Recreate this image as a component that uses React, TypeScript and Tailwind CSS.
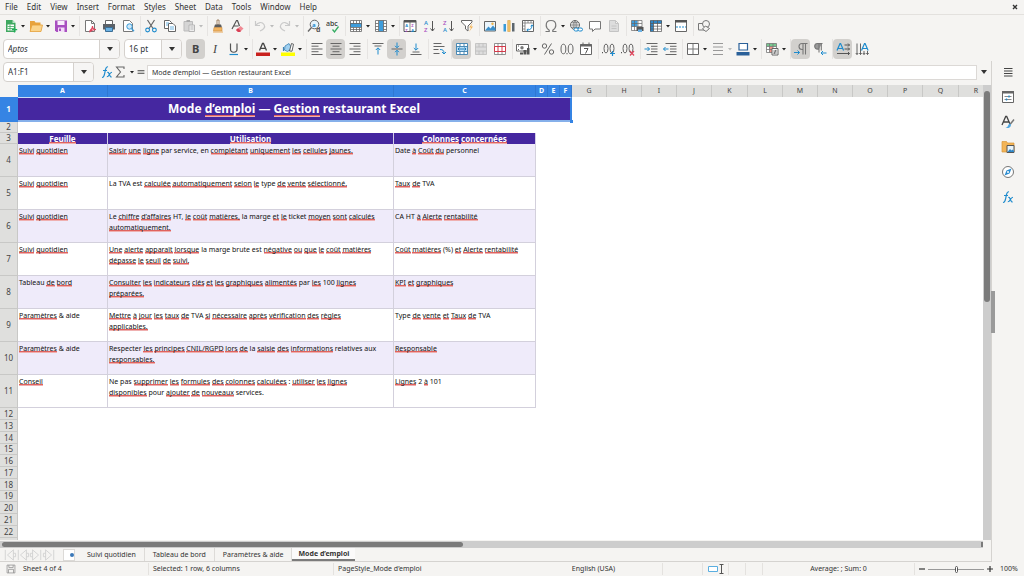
import { useState } from "react";
import type { ReactNode } from "react";
import clsx from "clsx";

const DARK = "#555";
const BLUE = "#1e8bcd";

const MENUS = ["File", "Edit", "View", "Insert", "Format", "Styles", "Sheet", "Data", "Tools", "Window", "Help"];

const page = <path d="M2.5 1.5h6l3 3v8h-9z" fill="#fff" stroke="#777" />;

const ICONS: Record<string, ReactNode> = {
  new: (
    <>
      <path d="M2 1h6.500l3 3v9H2z" fill="#3fa860" />
      <path d="M8.500 1v3h3z" fill="#b5e3c3" />
      <path d="M3.500 5.500h6.500v6H3.500z" fill="#fff" />
      <path d="M3.500 7.500h6.500M3.500 9.500h6.500M6 5.500v6" stroke="#3fa860" strokeWidth="0.8" />
      <path d="M10.500 8v5.500M7.800 10.700h5.400" stroke="#1fae57" strokeWidth="1.300" />
    </>
  ),
  open: (
    <>
      <path d="M1 2h4.500l1 1.500h5V12H1z" fill="#e8a33d" />
      <path d="M1 12.500 3 6h10.500L12 12.500z" fill="#fbd48b" stroke="#e59f38" strokeWidth="0.8" />
    </>
  ),
  save: (
    <>
      <path d="M1 1.500h12v11.500H2.500L1 11.500z" fill="#a84fc0" />
      <path d="M3.500 2h7v4h-7z" fill="#f8eefb" />
      <path d="M4 8.500h6.500V13H4z" fill="#f3ddf8" />
      <path d="M5 9.500h2V12H5z" fill="#a84fc0" />
    </>
  ),
  pdf: (
    <>
      {page}
      <path d="M8.500 1.500v3h3" fill="none" stroke="#777" />
      <path d="M7 11.500c2-1 2.500-3 2.500-4.500 0 2 1.500 3.500 3.500 3.500-2 0-4 .3-6 2z" fill="none" stroke="#e0445c" strokeWidth="1.100" />
    </>
  ),
  print: (
    <>
      <path d="M3.500 1.500h7v4h-7z" fill="#fff" stroke="#666" />
      <path d="M1 5h12v5.500H1z" fill="#5a6066" />
      <path d="M3.500 8.500h7v4h-7z" fill="#6cb2e4" stroke="#3c6f96" />
    </>
  ),
  preview: (
    <>
      {page}
      <circle cx="8.500" cy="7.500" r="2.700" fill="#cfe9fa" stroke="#3a9bd8" />
      <path d="m10.500 9.500 2.500 2.800" stroke="#3a9bd8" strokeWidth="1.300" />
    </>
  ),
  cut: (
    <>
      <path d="M3.500 1 9 9.500M10.500 1 5 9.500" stroke="#666" strokeWidth="1.200" />
      <circle cx="3.600" cy="11" r="1.900" fill="none" stroke={BLUE} strokeWidth="1.100" />
      <circle cx="10.400" cy="11" r="1.900" fill="none" stroke={BLUE} strokeWidth="1.100" />
    </>
  ),
  copy: (
    <>
      <path d="M1.500 1.500h5l2 2v6h-7z" fill="#fff" stroke="#666" />
      <path d="M5.500 4.500h4.500l2.500 2.500v5.500h-7z" fill="#fff" stroke="#666" />
      <path d="M3 4h3M3 6h2M7 8h4M7 10h4" stroke="#5aa9dc" strokeWidth="0.9" />
    </>
  ),
  paste: (
    <>
      <path d="M2 2.500h8.500V12H2z" fill="#d5d5d5" stroke="#bbb" />
      <path d="M4.500 1h3.500v2H4.500z" fill="#aaa" />
      <path d="M7 6h5.500v6.500H7z" fill="#eee" stroke="#b5b5b5" />
      <path d="M8.500 8h3M8.500 10h3" stroke="#bbb" />
    </>
  ),
  brush: (
    <>
      <path d="M6 1h2v5H6z" fill="#fff" stroke="#8a6844" strokeWidth="0.8" />
      <path d="M4 5.500h6l1 3H3z" fill="#5d5d5d" />
      <path d="M3 8.500h8V12H2.500z" fill="#f3b562" stroke="#c98a3c" strokeWidth="0.6" />
      <path d="M2 13h10" stroke="#e8a858" />
    </>
  ),
  clear: (
    <>
      <path d="M2 10 6.500 1.500h1L9.500 7M3.700 7h4.800" fill="none" stroke={DARK} strokeWidth="1.200" />
      <path d="m6 11 4.500-4 3 2.500L10 13H8z" fill="#f08a94" />
      <path d="m6 11 2-1.800 3 2.800-1 1H8z" fill="#d94156" />
    </>
  ),
  undo: <path d="M2.500 2v4.500H7M2.800 6.300C5 3 9 2.500 11 5.500S10 10.500 7 12" fill="none" stroke="#c9c9c9" strokeWidth="1.200" />,
  redo: <path d="M11.500 2v4.500H7M11.200 6.300C9 3 5 2.500 3 5.500S4 10.500 7 12" fill="none" stroke="#c9c9c9" strokeWidth="1.200" />,
  find: (
    <>
      <circle cx="7.500" cy="5.500" r="4.300" fill="#e6f4fc" stroke="#666" />
      <path d="M4.500 8.500 1 12.500" stroke="#666" strokeWidth="1.400" />
      <text x="5" y="7.500" fontSize="6" fontWeight="700" fill={BLUE}>a</text>
      <text x="9" y="13" fontSize="7" fontWeight="700" fill={DARK}>d</text>
    </>
  ),
  spell: (
    <>
      <text x="0" y="7" fontSize="7" fontWeight="500" fill="#333">abc</text>
      <path d="m6.500 10.500 2 2.500L12.500 7.500" fill="none" stroke="#35ad63" strokeWidth="1.300" />
    </>
  ),
  row: (
    <>
      <path d="M1 1.500h12v11H1z" fill="#fff" />
      <path d="M1 4h12v4H1z" fill="#3f9ddb" />
      <path d="M1.500 1.500h11v11h-11zM1.500 4.500h11M1.500 8.500h11M1.500 10.500h11M4.500 1.500v3M7.500 1.500v3M10.500 1.500v3M4.500 8.500v4M7.500 8.500v4M10.500 8.500v4" fill="none" stroke="#666" strokeWidth="0.8" />
    </>
  ),
  column: (
    <>
      <path d="M1 1.500h12v11H1z" fill="#fff" />
      <path d="M5 1.500h4.500v11H5z" fill="#3f9ddb" />
      <path d="M1.500 1.500h11v11h-11zM4.500 1.500v11M9.500 1.500v11M1.500 4.500h3M1.500 7.500h3M1.500 10.500h3M9.500 4.500h3M9.500 7.500h3M9.500 10.500h3" fill="none" stroke="#666" strokeWidth="0.8" />
    </>
  ),
  sort: (
    <>
      <path d="M1 1.500h12v11H1z" fill="#fff" stroke={DARK} />
      <path d="M1 1h12v2.500H1z" fill="#555" />
      <path d="M7 3v10" stroke={DARK} strokeWidth="0.7" />
      <text x="2.300" y="7.500" fontSize="4" fontWeight="700" fill={BLUE}>A</text>
      <text x="2.300" y="12.500" fontSize="4" fontWeight="700" fill="#a84fc0">Z</text>
      <text x="8.300" y="7.500" fontSize="4" fontWeight="700" fill="#a84fc0">Z</text>
      <text x="8.300" y="12.500" fontSize="4" fontWeight="700" fill={BLUE}>A</text>
    </>
  ),
  ascending: (
    <>
      <text x="2" y="5.500" fontSize="6" fontWeight="500" fill={BLUE}>A</text>
      <text x="2" y="13" fontSize="6" fontWeight="500" fill="#a84fc0">Z</text>
      <path d="M10.500 2v10M8.500 9.500l2 2.500 2-2.500" fill="none" stroke={DARK} />
    </>
  ),
  descending: (
    <>
      <text x="2" y="5.500" fontSize="6" fontWeight="500" fill="#a84fc0">Z</text>
      <text x="2" y="13" fontSize="6" fontWeight="500" fill={BLUE}>A</text>
      <path d="M10.500 2v10M8.500 9.500l2 2.500 2-2.500" fill="none" stroke={DARK} />
    </>
  ),
  filter: (
    <>
      <path d="M1.500 1.500h10.500v1.500L8 7v5l-2.500-2V7l-4-4z" fill="#fff" stroke="#666" />
      <path d="m12.500 4-3.300 4.500h2L9 13l4-5.500h-2z" fill="#f5b04c" />
    </>
  ),
  image: (
    <>
      <path d="M1.500 2.500h11v9.500h-11z" fill="#eaf5fc" stroke="#666" />
      <path d="m2 11.500 3.500-4 2 2 2.500-3 2.500 3v2z" fill="#3a8fcb" />
      <circle cx="9.500" cy="4.800" r="1.200" fill="#f2b349" />
    </>
  ),
  chart: (
    <>
      <path d="M1.500 5h2.500v7.500H1.500z" fill="#3a9bd8" />
      <path d="M5.700 1.500h2.500v11H5.700z" fill="#f2c46d" stroke="#d79a36" strokeWidth="0.5" />
      <path d="M10 4h2.500v8.500H10z" fill="#5c666e" />
    </>
  ),
  pivot: (
    <>
      <path d="M1.500 1.500h11v11h-11z" fill="#fff" stroke="#666" />
      <path d="M1.500 4h11M4 1.500v11M7 1.500v2.500M10 1.500v2.500M1.500 7h2.500M1.500 10h2.500" stroke="#777" strokeWidth="0.8" />
      <path d="M6 11c3.500 0 5-1.500 5-5M9.700 7.300 11 5.800l1.300 1.500M7.300 9.600 5.800 11l1.500 1.300" fill="none" stroke={BLUE} />
    </>
  ),
  omega: <path d="M1.500 12.500h3.700v-1.300C3.200 10 2.200 8.300 2.200 6.300 2.200 3.300 4.300 1.500 7 1.500s4.800 1.800 4.800 4.800c0 2-1 3.700-3 4.900v1.300h3.700" fill="none" stroke="#777" strokeWidth="1.200" />,
  link: (
    <>
      <circle cx="6" cy="6" r="4.500" fill="#fff" stroke="#666" />
      <path d="M1.500 6h9M6 1.500v9M6 1.500c-2.500 2.500-2.500 6.500 0 9M6 1.500c2.500 2.500 2.500 6.500 0 9M2.300 3.700h7.400M2.300 8.300h7.400" fill="none" stroke="#666" strokeWidth="0.7" />
      <rect x="5" y="9" width="4.500" height="3" rx="1.500" fill="#fff" stroke={BLUE} />
      <rect x="9" y="9" width="4.500" height="3" rx="1.500" fill="#fff" stroke={BLUE} />
    </>
  ),
  comment: <path d="M1.500 2.500h11v7.500H7l-2.500 2.500V10h-3z" fill="#fff" stroke="#777" />,
  header: <path d="M2.500 1.500h6l3 3v8h-9zM8.500 1.500v3h3M4.500 7h5M4.500 9.500h5" fill="#ddd" stroke="#c4c4c4" />,
  printArea: (
    <>
      <path d="M1 1.500h11v10H1z" fill="#fff" />
      <path d="M1.500 1.500h6v6h-6z" fill="#3f9ddb" />
      <path d="M1.500 1.500h10.500v10H1.500zM1.500 4.500H12M1.500 7.500H12M4.500 1.500v10M8 1.500v10" fill="none" stroke="#666" strokeWidth="0.7" />
      <path d="M6.500 8h7v4h-7z" fill="#555" />
      <path d="M8 10.500h4v2.500H8z" fill="#6cb2e4" />
    </>
  ),
  freeze: (
    <>
      <path d="M3.500 3.500h9v9h-9z" fill="#fff" />
      <path d="M1 1.500h12v3H4.500v8H1z" fill="#2f86c6" />
      <path d="M1.500 1.500h11v11h-11zM1.500 4.500h11M1.500 7.200h11M1.500 10h11M4.500 1.500v11M8.500 1.500v11" fill="none" stroke="#555" strokeWidth="0.7" />
    </>
  ),
  split: (
    <>
      <path d="M1.500 1.500h11v11h-11z" fill="#fff" stroke="#666" />
      <path d="M1 1h12v2.500H1z" fill="#555" />
      <path d="M2 8h10" stroke={BLUE} strokeDasharray="2 1" />
    </>
  ),
  shapes: (
    <>
      <path d="M1.500 4.500h6.500V11H1.500z" fill="none" stroke="#777" />
      <circle cx="9" cy="5" r="3.500" fill="#f5f4f2" stroke="#777" />
      <path d="m8.500 7 4 2.500-3.500 3-3.500-2.500z" fill="#f5f4f2" stroke="#777" />
    </>
  ),
  bold: <text x="3" y="11" fontSize="11" fontWeight="700" fill="#444">B</text>,
  italic: <text x="5" y="11" fontSize="12" fontStyle="italic" fontFamily="Liberation Serif, serif" fill="#444">I</text>,
  underline: (
    <>
      <path d="M3.500 1.500v5.500c0 4.300 6.500 4.300 6.500 0V1.500" fill="none" stroke="#555" strokeWidth="1.200" />
      <path d="M2.500 12.500h8.500" stroke={BLUE} strokeWidth="1.200" />
    </>
  ),
  fontColor: (
    <>
      <path d="M3.500 8.500 6.500 1.500h1l3 7M4.700 6.300h4.600" fill="none" stroke="#444" strokeWidth="1.300" />
      <path d="M0 10.500h14V14H0z" fill="#c9211e" />
    </>
  ),
  highlight: (
    <>
      <path d="m4 4 4-2.500 3 5-4.500 3-3-1.500z" fill="#9fd0f0" stroke="#3c82b4" strokeWidth="0.8" />
      <path d="m8.500 9 2-7.500 2 .7-1.500 7z" fill="#fff" stroke="#555" strokeWidth="0.9" />
      <path d="M2.500 5v4" stroke="#3c82b4" strokeWidth="1.200" />
      <path d="M0 10.500h14V14H0z" fill="#ffff00" />
    </>
  ),
  left: <path d="M1.500 1.500h11M1.500 4.200h7M1.500 7h11M1.500 9.700h7M1.500 12.500h11" stroke="#666" />,
  center: <path d="M1.500 1.500h11M3.500 4.200h7M1.500 7h11M3.500 9.700h7M1.500 12.500h11" stroke="#666" />,
  right: <path d="M1.500 1.500h11M5.500 4.200h7M1.500 7h11M5.500 9.700h7M1.500 12.500h11" stroke="#666" />,
  top: (
    <>
      <path d="M1.500 1.500h11M3.500 4h7" stroke="#666" />
      <path d="M7 12.500V6M4.800 8 7 5.800 9.200 8" fill="none" stroke={BLUE} />
    </>
  ),
  middle: (
    <>
      <path d="M1.500 7h11" stroke="#666" />
      <path d="M7 .5v5M5 3.800l2 2 2-2M7 13.500v-5M5 10.200l2-2 2 2" fill="none" stroke={BLUE} />
    </>
  ),
  bottom: (
    <>
      <path d="M1.500 12.500h11M3.500 10h7" stroke="#666" />
      <path d="M7 1.500V8M4.800 6 7 8.200 9.200 6" fill="none" stroke={BLUE} />
    </>
  ),
  wrap: (
    <>
      <path d="M1.500 1.500h8M1.500 4.500h11M1.500 7.500h5M1.500 11.500h6" stroke="#666" />
      <path d="M8 7.500c3 0 4 1 4 4M10 10l2 2 2-2" fill="none" stroke={BLUE} />
    </>
  ),
  merge: (
    <>
      <path d="M1.500 1.500h11v11h-11z" fill="#fff" />
      <path d="M1.500 4.500h11v5h-11z" fill="#b8def5" />
      <path d="M1.500 1.500h11v11h-11zM1.500 4.500h11M1.500 9.500h11M5 1.500v3M9 1.500v3M5 9.500v3M9 9.500v3" fill="none" stroke="#3b7fae" strokeWidth="0.9" />
      <path d="M3 7h8M4.500 5.500 3 7l1.500 1.500M9.500 5.500 11 7 9.500 8.500" fill="none" stroke="#1674b5" strokeWidth="0.9" />
    </>
  ),
  mergeCells: (
    <>
      <path d="M1.500 1.500h11v11h-11z" fill="#ddd" />
      <path d="M1.500 1.500h11v11h-11zM1.500 5h11M1.500 9h11M5 1.500v3.500M9 1.500v3.500M5 9v3.500M9 9v3.500" fill="none" stroke="#bcbcbc" strokeWidth="0.8" />
    </>
  ),
  unmerge: (
    <>
      <path d="M1.500 1.500h11v11h-11z" fill="#fff" />
      <path d="M1.500 1.500h11v3h-11zM1.500 9.500h11v3h-11zM5 1.500v3M9 1.500v3M5 9.500v3M9 9.500v3M1.500 4.500v5M12.500 4.500v5" fill="none" stroke="#777" strokeWidth="0.8" />
      <path d="M1.500 4.500h11v5h-11zM5 4.500v5M9 4.500v5" fill="none" stroke="#d33a4a" />
    </>
  ),
  currency: (
    <>
      <path d="M.5 2.500h12v6.500H.5z" fill="#fff" stroke="#666" />
      <circle cx="6" cy="5.700" r="1.700" fill="#777" />
      <path d="M2 4h1M2 7.500h1" stroke="#666" />
      <path d="M7.500 8h3v4.500h-3zM11 6h2.500v6.500H11zM4 10.500h3v2H4z" fill="#555" />
    </>
  ),
  percent: (
    <>
      <circle cx="3.500" cy="4" r="2.200" fill="none" stroke="#666" />
      <circle cx="10.500" cy="10" r="2.200" fill="none" stroke="#666" />
      <path d="M10.500 1.500 3.500 12.500" stroke="#666" />
    </>
  ),
  number: (
    <>
      <ellipse cx="3.400" cy="7" rx="2.400" ry="4.800" fill="none" stroke="#666" />
      <ellipse cx="10.600" cy="7" rx="2.400" ry="4.800" fill="none" stroke="#666" />
      <path d="M6.500 11h1v1.200h-1z" fill="#555" />
    </>
  ),
  date: (
    <>
      <path d="M1.500 2.500h11v10h-11z" fill="#fff" stroke="#666" />
      <path d="M1.500 2h11v2.500h-11zM3.500.5h1v2h-1zM9.500.5h1v2h-1z" fill="#666" />
      <path d="M5 6.500h4L6.500 11.500" fill="none" stroke="#555" />
    </>
  ),
  addDecimal: (
    <>
      <path d="M0 10h1v1.200H0z" fill="#555" />
      <ellipse cx="4" cy="6.500" rx="2" ry="4.500" fill="none" stroke="#666" />
      <ellipse cx="10" cy="6.500" rx="2" ry="4.500" fill="none" stroke="#666" />
      <path d="M8 11.500h5M10.500 9v5" stroke={BLUE} strokeWidth="1.200" />
    </>
  ),
  removeDecimal: (
    <>
      <path d="M0 10h1v1.200H0z" fill="#555" />
      <ellipse cx="4" cy="6.500" rx="2" ry="4.500" fill="none" stroke="#666" />
      <ellipse cx="10" cy="6.500" rx="2" ry="4.500" fill="none" stroke="#666" />
      <path d="m9 9 4 4.500M13 9l-4 4.500" stroke="#e0445c" strokeWidth="1.200" />
    </>
  ),
  indent: (
    <>
      <path d="M2.500 1.500h11M7 4.300h6.500M7 7h6.500M7 9.700h6.500M2.500 12.500h11" stroke="#666" />
      <path d="M.5 7h5M3.500 5l2 2-2 2" fill="none" stroke={BLUE} />
    </>
  ),
  outdent: (
    <>
      <path d="M2.500 1.500h11M7 4.300h6.500M7 7h6.500M7 9.700h6.500M2.500 12.500h11" stroke="#666" />
      <path d="M.5 7h5M2.500 5l-2 2 2 2" fill="none" stroke={BLUE} />
    </>
  ),
  borders: (
    <>
      <path d="M1.500 1.500h11v11h-11z" fill="#fff" stroke="#666" />
      <path d="M7 2v10M2 7h10" stroke="#777" />
    </>
  ),
  borderStyle: <path d="M2 1.500h10M2 5h10M2 8.500h10M2 12.500h10" stroke="#999" />,
  borderColor: (
    <>
      <path d="M3 1.500h8.500v6.500H3z" fill="#fff" stroke="#2a6099" strokeWidth="1.200" />
      <path d="M.5 10h13v3.500H.5z" fill="#2a6099" />
    </>
  ),
  conditional: (
    <>
      <path d="M1.500 1.500h10v9h-10z" fill="#fff" />
      <path d="M1.500 1.500h10v3h-10z" fill="#77c98f" />
      <path d="M4.500 4.500h3.500v6H4.500z" fill="#ee9488" />
      <path d="M1.500 1.500h10v9h-10zM1.500 4.500h10M1.500 7.500h10M4.500 1.500v9M8 1.500v9" fill="none" stroke="#777" strokeWidth="0.8" />
      <path d="M7 6.500h6v6.500H7z" fill="#fff" stroke="#666" />
      <path d="M8.300 9h3.500M8.300 11h3.500M11 7.800l-2 4.200" stroke="#555" strokeWidth="0.8" />
    </>
  ),
  ltr: (
    <>
      <path d="M13.500 1.500H8a3 3 0 0 0 0 6h1M9 1.500v11M11.500 1.500v11" fill="none" stroke="#777" strokeWidth="1.100" />
      <path d="M0 10.500h5.500M3.500 8.500l2 2-2 2" fill="none" stroke={BLUE} />
    </>
  ),
  rtl: (
    <>
      <path d="M9 1.500H4.500a2.800 2.800 0 0 0 0 5.600H6z" fill="#999" />
      <path d="M9.500 1.500H4.500a2.800 2.800 0 0 0 0 5.600H6M6 1.500v9M8.300 1.500v7" fill="none" stroke="#777" strokeWidth="1.100" />
      <path d="M8 11h5.500M10 9l-2 2 2 2" fill="none" stroke={BLUE} />
    </>
  ),
  textHorizontal: (
    <>
      <path d="M1 8.500 4 1.500h.6l3 7M2 6.500h4.500" fill="none" stroke={BLUE} strokeWidth="1.200" />
      <path d="M8.500 3h5M8.500 7h5M1 11.500h12.500M12 1.500 13.500 3 12 4.500M12 5.500 13.500 7 12 8.500M12 10l1.500 1.500L12 13" fill="none" stroke={DARK} />
    </>
  ),
  textVertical: (
    <>
      <path d="m6.500 8.500 3-7h.6l3 7M7.500 6.500H12" fill="none" stroke={BLUE} strokeWidth="1.200" />
      <path d="M2 1.500v11M5.500 1.500v11M9 9v3.500M12.500 9v3.500M.8 11 2 12.500 3.200 11M4.300 11l1.200 1.500L6.700 11M7.800 11 9 12.500l1.200-1.500M11.300 11l1.200 1.500 1.200-1.500" fill="none" stroke={DARK} strokeWidth="0.9" />
    </>
  ),
  fx: (
    <>
      <path d="M2 12.500c1.800.3 2.100-1.300 2.600-3.700l.9-4.300C6 2.500 6.600 1.500 8 1.800M3 5.500h4" fill="none" stroke={BLUE} strokeWidth="1.200" />
      <path d="m7.200 7.200 1.200.2L10.500 11.800l1.300.2M12 7.200c-1.300 0-1.900 1-2.600 2.300S8 11.900 6.800 11.800" fill="none" stroke={BLUE} strokeWidth="1.100" />
    </>
  ),
  sigma: <path d="M11 4V2H3.500L7.500 7l-4 5H11v-2" fill="none" stroke="#666" strokeWidth="1.100" />,
  equals: <path d="M3 5.500h8M3 8.500h8" stroke="#444" strokeWidth="1.200" />,
  menu: <path d="M3 3.500h8.500M3 6h8.500M3 8.500h8.500M3 11h8.500" stroke="#444" strokeWidth="1.100" />,
  properties: (
    <>
      <path d="M1.500 1.500h11v11h-11z" fill="#fff" stroke="#666" />
      <path d="M1 1h12v2.500H1z" fill="#666" />
      <path d="M3.500 6.500h7M3.500 9.500h7" stroke="#888" />
      <path d="M8 5.500v2M5.500 8.500v2" stroke={BLUE} strokeWidth="1.300" />
    </>
  ),
  styles: (
    <>
      <path d="M1 10 4.700 1.500h1L9 9M2.500 7h5.300" fill="none" stroke="#444" strokeWidth="1.300" />
      <path d="m13 4.500-4 5" stroke="#777" strokeWidth="1.500" />
      <path d="M4.500 13c3 .5 5.500-.5 5.500-3.500L8.500 8.500C7 9.500 7.500 12 4.500 13z" fill="#4ea6e0" />
    </>
  ),
  gallery: (
    <>
      <path d="M1 1.500h4.500l1 1.500H13v9H1z" fill="#f2b457" stroke="#d9963a" strokeWidth="0.7" />
      <path d="M6 5.500h7v7H6z" fill="#e6f3fc" stroke="#555" />
      <path d="m6.500 12 2.500-3 1.500 1.500 1-1 1.500 1.500v1z" fill="#2f86c6" />
    </>
  ),
  navigator: (
    <>
      <circle cx="7" cy="7" r="5.500" fill="#fff" stroke="#777" />
      <path d="M10.500 3.500 8.500 8.500l-5 2 2-5z" fill="#2b8cd0" />
      <circle cx="7" cy="7" r="1" fill="#fff" />
    </>
  ),
  sheetNav: <path d="M1.500 1v12M11 1 4 7l7 6zM11 5h2.500v4H11" fill="none" stroke="#d0d0d0" />,
  disk: <path d="M1.500 1.500h11v11h-11zM4 1.500v3.500h6V1.500M3.500 12.500v-5h7v5" fill="none" stroke="#888" />,
};

function Icon({ name, className = "size-3.5" }: { name: string; className?: string }) {
  return (
    <svg viewBox="0 0 14 14" className={clsx("shrink-0 overflow-visible", className)} aria-hidden="true">
      {ICONS[name]}
    </svg>
  );
}

function Caret({ faded }: { faded?: boolean }) {
  return (
    <svg viewBox="0 0 6 6" className="size-1.5" aria-hidden="true">
      <path d="M1 2h4L3 4.500z" fill={faded ? "#bbb" : "#222"} />
    </svg>
  );
}

function BigCaret() {
  return (
    <svg viewBox="0 0 8 6" className="h-1.5 w-2" aria-hidden="true">
      <path d="M1 1h6L4 5z" fill="#333" />
    </svg>
  );
}

type Tool = { icon: string; label: string; menu?: boolean; active?: boolean; disabled?: boolean };

function ToolButton({ icon, label, menu, active, disabled }: Tool) {
  return (
    <>
      <button
        type="button"
        aria-label={label}
        aria-pressed={active}
        disabled={disabled}
        className={clsx("flex h-5 w-[19px] shrink-0 items-center justify-center rounded-sm", active && "bg-[#d2d0cd]")}
      >
        <Icon name={icon} />
      </button>
      {menu && (
        <button type="button" aria-label={`${label} options`} disabled={disabled} className="flex h-5 w-1.5 shrink-0 items-center justify-center">
          <Caret faded={disabled} />
        </button>
      )}
    </>
  );
}

function ToolGroups({ groups }: { groups: Tool[][] }) {
  return (
    <>
      {groups.map((group, i) => (
        <div key={i} className={clsx("flex shrink-0 items-center", i > 0 && "ml-[3px] border-l border-[#e6e4e2]")}>
          {group.map((tool) => (
            <ToolButton key={tool.label} {...tool} />
          ))}
        </div>
      ))}
    </>
  );
}

const STANDARD: Tool[][] = [
  [
    { icon: "new", label: "New", menu: true },
    { icon: "open", label: "Open", menu: true },
    { icon: "save", label: "Save", menu: true },
  ],
  [
    { icon: "pdf", label: "Export as PDF" },
    { icon: "print", label: "Print" },
    { icon: "preview", label: "Print preview" },
  ],
  [
    { icon: "cut", label: "Cut" },
    { icon: "copy", label: "Copy" },
    { icon: "paste", label: "Paste", menu: true, disabled: true },
  ],
  [
    { icon: "brush", label: "Clone formatting" },
    { icon: "clear", label: "Clear formatting" },
  ],
  [
    { icon: "undo", label: "Undo", menu: true, disabled: true },
    { icon: "redo", label: "Redo", menu: true, disabled: true },
  ],
  [
    { icon: "find", label: "Find and replace" },
    { icon: "spell", label: "Spelling" },
  ],
  [
    { icon: "row", label: "Row", menu: true },
    { icon: "column", label: "Column", menu: true },
  ],
  [
    { icon: "sort", label: "Sort" },
    { icon: "ascending", label: "Sort ascending" },
    { icon: "descending", label: "Sort descending" },
    { icon: "filter", label: "AutoFilter" },
  ],
  [
    { icon: "image", label: "Insert image" },
    { icon: "chart", label: "Insert chart" },
    { icon: "pivot", label: "Insert pivot table" },
  ],
  [
    { icon: "omega", label: "Special character", menu: true },
    { icon: "link", label: "Insert hyperlink" },
    { icon: "comment", label: "Insert comment" },
    { icon: "header", label: "Headers and footers", disabled: true },
  ],
  [
    { icon: "printArea", label: "Define print area" },
    { icon: "freeze", label: "Freeze rows and columns", menu: true },
    { icon: "split", label: "Split window" },
  ],
  [{ icon: "shapes", label: "Show draw functions" }],
];

const FORMATTING: Tool[][] = [
  [
    { icon: "bold", label: "Bold", active: true },
    { icon: "italic", label: "Italic" },
    { icon: "underline", label: "Underline", menu: true },
  ],
  [
    { icon: "fontColor", label: "Font color", menu: true },
    { icon: "highlight", label: "Background color", menu: true },
  ],
  [
    { icon: "left", label: "Align left" },
    { icon: "center", label: "Center horizontally", active: true },
    { icon: "right", label: "Align right" },
  ],
  [
    { icon: "top", label: "Align top" },
    { icon: "middle", label: "Center vertically", active: true },
    { icon: "bottom", label: "Align bottom" },
  ],
  [{ icon: "wrap", label: "Wrap text" }],
  [
    { icon: "merge", label: "Merge and center", active: true },
    { icon: "mergeCells", label: "Merge cells", disabled: true },
    { icon: "unmerge", label: "Unmerge cells" },
  ],
  [
    { icon: "currency", label: "Format as currency", menu: true },
    { icon: "percent", label: "Format as percent" },
    { icon: "number", label: "Format as number" },
    { icon: "date", label: "Format as date" },
  ],
  [
    { icon: "addDecimal", label: "Add decimal place" },
    { icon: "removeDecimal", label: "Delete decimal place" },
  ],
  [
    { icon: "indent", label: "Increase indent" },
    { icon: "outdent", label: "Decrease indent" },
  ],
  [
    { icon: "borders", label: "Borders", menu: true },
    { icon: "borderStyle", label: "Border style", menu: true, disabled: true },
    { icon: "borderColor", label: "Border color", menu: true },
  ],
  [{ icon: "conditional", label: "Conditional", menu: true }],
  [
    { icon: "ltr", label: "Left-to-right", active: true },
    { icon: "rtl", label: "Right-to-left" },
  ],
  [
    { icon: "textHorizontal", label: "Text direction left to right", active: true },
    { icon: "textVertical", label: "Text direction top to bottom" },
  ],
];

function Combo({ label, value, className, italic }: { label: string; value: string; className: string; italic?: boolean }) {
  const [text, setText] = useState(value);
  return (
    <div className={clsx("flex h-5 shrink-0 overflow-hidden rounded-sm border border-[#d5d1cd] bg-white", className)}>
      <input
        aria-label={label}
        value={text}
        onChange={(e) => setText(e.target.value)}
        className={clsx("min-w-0 flex-1 px-1 text-[8px] text-[#2e3436] outline-none", italic && "italic")}
      />
      <button type="button" aria-label={`${label} list`} className="flex w-5 items-center justify-center border-l border-[#d5d1cd] bg-[#f6f5f4]">
        <BigCaret />
      </button>
    </div>
  );
}

// Column widths of the sheet, A to R
const COLUMNS: [string, number][] = [
  ["A", 90], ["B", 286], ["C", 142], ["D", 12], ["E", 12], ["F", 12],
  ["G", 35], ["H", 35], ["I", 35], ["J", 35], ["K", 36], ["L", 35],
  ["M", 35], ["N", 35], ["O", 35], ["P", 35], ["Q", 36], ["R", 35],
];
const SELECTED = 6;

// Square brackets enclose the words that the spell checker marks
const ROWS: string[][] = [
  ["[Suivi quotidien]", "[Saisir une ligne] par service, en [complétant uniquement les cellules jaunes.]", "Date [à Coût du] personnel"],
  ["[Suivi quotidien]", "La TVA est [calculée automatiquement selon le] type [de vente sélectionné.]", "[Taux de] TVA"],
  ["[Suivi quotidien]", "Le [chiffre d’affaires] HT, [le coût matières,] la marge [et le] ticket [moyen sont calculés]\n[automatiquement.]", "CA HT [à Alerte rentabilité]"],
  ["[Suivi quotidien]", "[Une alerte apparaît lorsque] la marge brute est [négative ou que le coût matières]\n[dépasse le seuil de suivi.]", "[Coût matières] (%) [et Alerte rentabilité]"],
  ["Tableau [de bord]", "[Consulter les indicateurs clés et les graphiques alimentés] par [les] 100 [lignes]\n[préparées.]", "[KPI et graphiques]"],
  ["[Paramètres] & aide", "[Mettre à jour les taux de] TVA [si nécessaire après vérification des règles]\n[applicables.]", "Type [de vente et Taux de] TVA"],
  ["[Paramètres] & aide", "Respecter [les principes CNIL/RGPD lors de] la [saisie des informations] relatives aux\n[responsables.]", "[Responsable]"],
  ["[Conseil]", "Ne pas [supprimer les formules des colonnes calculées] : [utiliser les lignes]\n[disponibles] pour [ajouter de nouveaux] services.", "[Lignes] 2 [à] 101"],
];

function Spelled({ text }: { text: string }) {
  return (
    <>
      {text.split(/[[\]]/).map((part, i) =>
        i % 2 === 0
          ? part
          : part.split(/( )/).map((word, j) =>
              word === " " ? (
                " "
              ) : (
                <span
                  key={`${i}-${j}`}
                  className="[background-image:linear-gradient(#e0625e,#e0625e),linear-gradient(#efb0b0,#efb0b0)] [background-position:0_calc(100%-1px),0_100%] [background-size:100%_1px] [background-repeat:no-repeat]"
                >
                  {word}
                </span>
              )
            )
      )}
    </>
  );
}

function RowHead({ n, selected }: { n: number; selected?: boolean }) {
  return (
    <th
      scope="row"
      className={clsx(
        "border-r border-b p-0 text-center text-[8px] leading-[10px]",
        selected ? "border-[#3584e4] bg-[#3584e4] font-bold text-white" : "border-[#c8c8c6] bg-[#dfdfdd] font-normal text-[#444]"
      )}
    >
      {n}
    </th>
  );
}

function Sheet() {
  return (
    <div className="min-h-0 flex-1 overflow-hidden bg-white">
      <table className="w-[1169px] table-fixed border-separate border-spacing-0">
        <colgroup>
          <col className="w-[18px]" />
          {COLUMNS.map(([name, width]) => (
            <col key={name} style={{ width }} />
          ))}
          <col />
        </colgroup>
        <thead>
          <tr className="h-3">
            <th className="bg-[#f5f4f2] p-0" aria-label="Select all" />
            {COLUMNS.map(([name], i) => (
              <th
                key={name}
                scope="col"
                className={clsx(
                  "border-r p-0 text-center text-[7px] leading-[12px]",
                  i < SELECTED ? "border-[#2f78d2] bg-[#3584e4] font-bold text-white" : "border-[#c8c8c6] bg-[#dfdfdd] font-normal text-[#444]"
                )}
              >
                {name}
              </th>
            ))}
            <th className="bg-[#dfdfdd] p-0" />
          </tr>
        </thead>
        <tbody>
          <tr className="h-[25px]">
            <RowHead n={1} selected />
            <td colSpan={6} className="relative border-t border-r-2 border-b-2 border-t-[#c9dcf6] border-r-[#3584e4] border-b-[#86b0ea] bg-[#4527a0] p-0 text-center text-[12px] leading-[20px] font-bold text-white">
              Mode <Spelled text="[d’emploi]" /> — <Spelled text="[Gestion]" /> restaurant Excel
              <span className="absolute -right-[3px] -bottom-[3px] size-[3px] bg-[#3584e4]" />
            </td>
            <td colSpan={13} />
          </tr>
          <tr className="h-[11px]">
            <RowHead n={2} />
            <td colSpan={19} />
          </tr>
          <tr className="h-[11px]">
            <RowHead n={3} />
            {["Feuille", "Utilisation", "Colonnes concernées"].map((title) => (
              <td key={title} className="border-r border-[#d5cfe8] bg-[#4527a0] p-0 text-center text-[8px] leading-[11px] font-bold text-white">
                <Spelled text={`[${title}]`} />
              </td>
            ))}
            <td colSpan={16} />
          </tr>
          {ROWS.map((cells, i) => (
            <tr key={i} className="h-[33px]">
              <RowHead n={i + 4} />
              {cells.map((cell, j) => (
                <td
                  key={j}
                  className={clsx(
                    "border-r border-b border-[#d3d0dc] p-0 pt-px pl-px align-top text-[7px] leading-[11px] whitespace-pre text-[#111]",
                    i % 2 === 0 && "bg-[#efebfa]"
                  )}
                >
                  <Spelled text={cell} />
                </td>
              ))}
              <td colSpan={16} />
            </tr>
          ))}
          {Array.from({ length: 11 }, (_, i) => (
            <tr key={i} className={i % 4 === 3 ? "h-[11px]" : "h-3"}>
              <RowHead n={i + 12} />
              <td colSpan={19} />
            </tr>
          ))}
          <tr className="h-3">
            <td className="border-r border-[#c8c8c6] bg-[#dfdfdd]" />
            <td colSpan={19} />
          </tr>
        </tbody>
      </table>
    </div>
  );
}

const SHEETS = ["Suivi quotidien", "Tableau de bord", "Paramètres & aide", "Mode d’emploi"];

function SheetTabs() {
  const [current, setCurrent] = useState("Mode d’emploi");
  return (
    <div className="flex h-[14px] shrink-0 items-stretch border-b border-[#d5d3d0]">
      <div className="flex w-[63px] items-center gap-px pl-1">
        {["First sheet", "Previous sheet", "Next sheet", "Last sheet"].map((label, i) => (
          <button key={label} type="button" aria-label={label} disabled className={clsx("flex w-3 justify-center", i > 1 && "rotate-180")}>
            <Icon name="sheetNav" className="size-3" />
          </button>
        ))}
      </div>
      <button type="button" aria-label="Add sheet" className="flex w-4 items-center">
        <span className="flex h-3 w-3 items-center justify-end border border-[#dcdad7] bg-white">
          <span className="size-1 rounded-full bg-[#3a78b8]" />
        </span>
      </button>
      <div role="tablist" className="flex">
        {SHEETS.map((name) => (
          <button
            key={name}
            type="button"
            role="tab"
            aria-selected={name === current}
            onClick={() => setCurrent(name)}
            className={clsx(
              "text-[7px] leading-[12px] text-[#333]",
              name === current ? "border-b-2 border-[#7b7b7b] bg-[#fbfafa] px-1.5 font-bold" : "border-r border-[#dddbd8] px-2"
            )}
          >
            {name}
          </button>
        ))}
      </div>
    </div>
  );
}

function StatusBar() {
  const [zoom, setZoom] = useState(50);
  return (
    <footer className="grid h-[14px] shrink-0 grid-cols-[148fr_185fr_192fr_137fr_40fr_26fr_17fr_17fr_152fr_110fr] items-center text-[7px] leading-[12px] text-[#333]">
      <div className="flex items-center gap-[7px] pl-1.5">
        <Icon name="disk" className="size-2.5" />
        Sheet 4 of 4
      </div>
      <div className="border-l border-[#e4e2df] pl-1">Selected: 1 row, 6 columns</div>
      <div className="border-l border-[#e4e2df] pl-1">PageStyle_Mode d’emploi</div>
      <div className="text-center">English (USA)</div>
      <div className="h-3 border-l border-[#e4e2df]" />
      <div className="flex h-3 items-center border-l border-[#e4e2df] pl-1">
        <svg viewBox="0 0 18 12" className="h-3 w-[18px]" aria-hidden="true">
          <path d="M1.500 3.500h9v5h-9z" fill="#fff" stroke="#5aaee0" />
          <path d="M12.500 1.500h4M14.500 1.500v9M12.500 10.500h4" stroke="#555" />
        </svg>
      </div>
      <div className="h-3 border-l border-[#e4e2df]" />
      <div className="h-3 border-l border-[#e4e2df]" />
      <div className="border-l border-[#e4e2df] text-center">Average: ; Sum: 0</div>
      <div className="flex items-center gap-[3px] border-l border-[#e4e2df] pl-1">
        <button type="button" aria-label="Zoom out" onClick={() => setZoom(zoom - 5)}>
          <svg viewBox="0 0 6 6" className="size-1.5"><path d="M0 3h6" stroke="#333" strokeWidth="1.200" /></svg>
        </button>
        <input
          type="range"
          aria-label="Zoom"
          value={zoom}
          onChange={(e) => setZoom(Number(e.target.value))}
          className="h-3 w-14 appearance-none bg-transparent [&::-webkit-slider-runnable-track]:h-px [&::-webkit-slider-runnable-track]:bg-[#999] [&::-webkit-slider-thumb]:-mt-[3px] [&::-webkit-slider-thumb]:h-[7px] [&::-webkit-slider-thumb]:w-[3px] [&::-webkit-slider-thumb]:appearance-none [&::-webkit-slider-thumb]:rounded-sm [&::-webkit-slider-thumb]:border [&::-webkit-slider-thumb]:border-[#555] [&::-webkit-slider-thumb]:bg-white"
        />
        <button type="button" aria-label="Zoom in" onClick={() => setZoom(zoom + 5)}>
          <svg viewBox="0 0 6 6" className="size-1.5"><path d="M0 3h6M3 0v6" stroke="#333" strokeWidth="1.200" /></svg>
        </button>
        <span className="ml-1">100%</span>
      </div>
    </footer>
  );
}

function App() {
  const [formula, setFormula] = useState("Mode d’emploi — Gestion restaurant Excel");

  return (
    <div className="flex h-screen flex-col overflow-hidden bg-[#f5f4f2] font-['Noto_Sans','Open_Sans',sans-serif] text-[#333]">
      <div className="flex h-[15px] shrink-0 items-center border-b border-[#e3e1de] pr-1.5 pl-[5px]">
        <nav className="flex gap-[9px]">
          {MENUS.map((menu) => (
            <button key={menu} type="button" className="text-[8px] leading-[14px]">
              {menu}
            </button>
          ))}
        </nav>
        <button type="button" aria-label="Close document" className="ml-auto">
          <svg viewBox="0 0 6 6" className="size-1.5"><path d="m1 1 4 4M5 1 1 5" stroke="#333" strokeWidth="1.400" /></svg>
        </button>
      </div>

      <div className="flex h-[22px] shrink-0 items-center pl-px">
        <ToolGroups groups={STANDARD} />
      </div>

      <div className="flex h-6 shrink-0 items-center pl-[3px]">
        <Combo label="Font name" value="Aptos" italic className="mr-1 w-[117px]" />
        <Combo label="Font size" value="16 pt" className="mr-1 w-[58px]" />
        <ToolGroups groups={FORMATTING} />
      </div>

      <div className="flex min-h-0 flex-1">
        <main className="flex min-w-0 flex-1 flex-col">
          <div className="flex h-6 shrink-0 items-center pb-0.5 pl-[3px]">
            <Combo label="Name box" value="A1:F1" className="mr-[3px] w-[91px]" />
            <ToolButton icon="fx" label="Function wizard" />
            <div className="-ml-1.5 flex"><ToolButton icon="sigma" label="Select function" menu /></div>
            <button type="button" aria-label="Formula" className="flex w-3 justify-center">
              <Icon name="equals" className="size-3" />
            </button>
            <input
              aria-label="Input line"
              value={formula}
              onChange={(e) => setFormula(e.target.value)}
              className="h-[15px] min-w-0 flex-1 border border-[#dcd9d6] bg-white px-1 text-[7px] text-[#333] outline-none"
            />
            <button type="button" aria-label="Expand formula bar" className="flex w-[14px] justify-center">
              <BigCaret />
            </button>
          </div>

          <div className="flex min-h-0 flex-1">
            <Sheet />
            <div className="flex w-2 shrink-0 flex-col bg-[#cdcdcd] px-px pt-1.5">
              <div className="h-[47%] rounded-full bg-[#7b7b7b]" />
            </div>
          </div>
          <div className="mt-px mr-2 flex h-[7px] shrink-0 bg-[#cdcdcd] pl-0.5">
            <div className="my-px w-[47%] rounded-full bg-[#7b7b7b]" />
            <div className="my-px ml-auto w-0.5 bg-[#7b7b7b]" />
          </div>
          <SheetTabs />
        </main>

        <aside className="relative flex w-[33px] shrink-0 flex-col items-center gap-[11px] border-l border-[#d5d3d0] pt-1">
          {["menu", "properties", "styles", "gallery", "navigator", "fx"].map((name) => (
            <button key={name} type="button" aria-label={`Sidebar ${name}`}>
              <Icon name={name} />
            </button>
          ))}
          <div className="absolute top-1/2 -left-px h-[42px] w-1 -translate-y-1/2 bg-[#9a9a9a]" />
        </aside>
      </div>

      <StatusBar />
    </div>
  );
}

export default App;
